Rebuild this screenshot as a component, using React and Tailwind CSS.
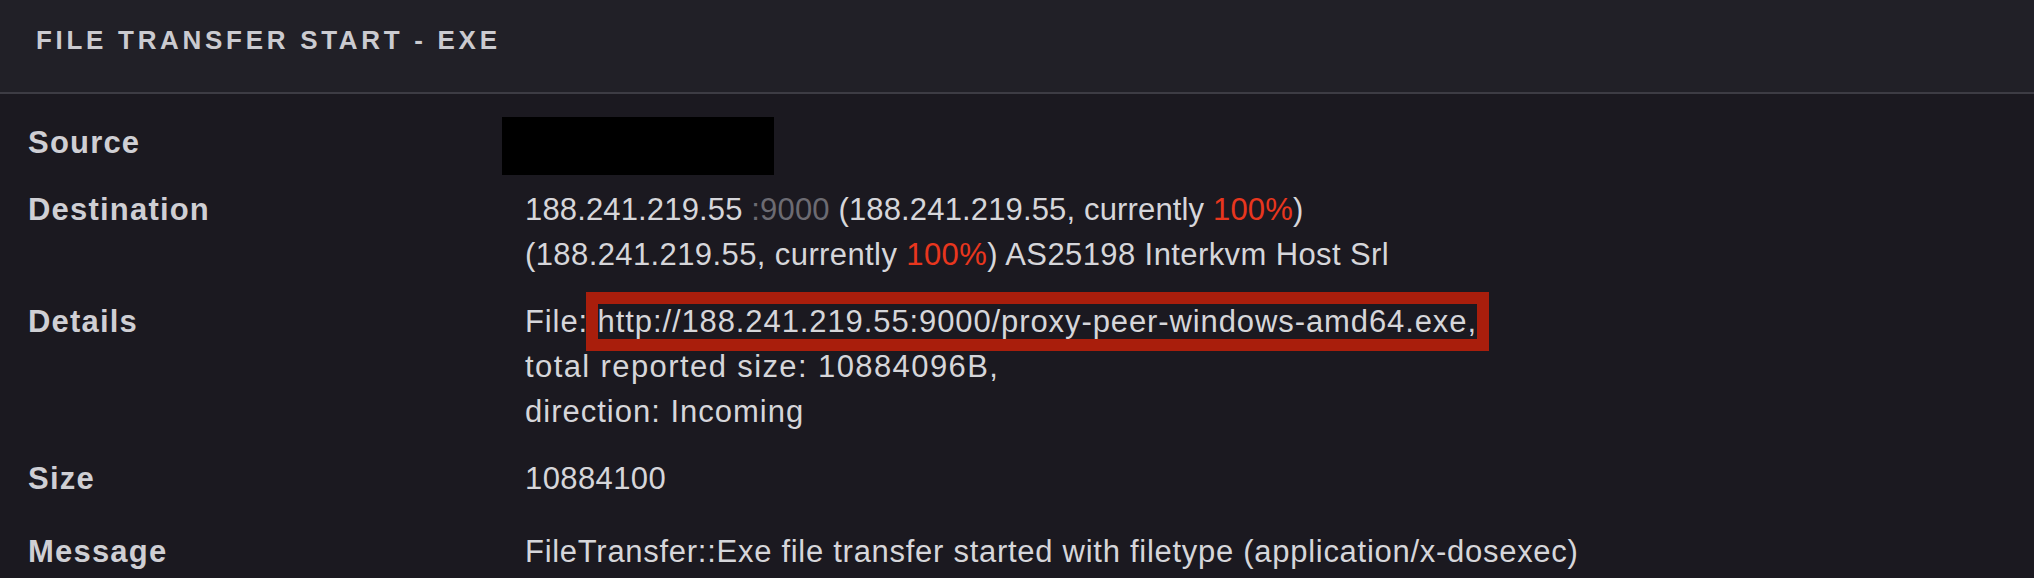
import React from "react";

const rows = [
  { label: "Source", redacted: true },
  {
    label: "Destination",
    lines: [
      {
        cls: "tracking-[0.15px]",
        text: (
          <>
            188.241.219.55 <span className="text-[#6c6b72]">:9000</span> (188.241.219.55, currently{" "}
            <span className="text-[#e8361e]">100%</span>)
          </>
        ),
      },
      {
        cls: "tracking-[0.4px]",
        text: (
          <>
            (188.241.219.55, currently <span className="text-[#e8361e]">100%</span>) AS25198 Interkvm Host Srl
          </>
        ),
      },
    ],
  },
  {
    label: "Details",
    lines: [
      {
        cls: "tracking-[0.9px]",
        text: (
          <>
            File:{" "}
            <span className="outline-[12px] outline-solid outline-[#a91e0c]">
              http://188.241.219.55:9000/proxy-peer-windows-amd64.exe,
            </span>
          </>
        ),
      },
      { cls: "tracking-[1.4px]", text: <>total reported size: 10884096B,</> },
      { cls: "tracking-[1px]", text: <>direction: Incoming</> },
    ],
  },
  { label: "Size", lines: [{ cls: "tracking-[0.4px]", text: <>10884100</> }] },
  {
    label: "Message",
    extra: true,
    lines: [
      {
        cls: "tracking-[0.72px]",
        text: <>FileTransfer::Exe file transfer started with filetype (application/x-dosexec)</>,
      },
    ],
  },
];

const App = () => {
  return (
    <div className="w-[2034px] h-[578px] overflow-hidden bg-[#1b1920] font-['Liberation_Sans',Arial,sans-serif]">
      {/* header */}
      <div className="h-[94px] bg-[#212027] flex items-center pb-[12px] pl-[36px] border-b-2 border-[#3d3c44]">
        <h1 className="text-[26px] font-bold tracking-[3.7px] uppercase text-[#cbcbd0]">
          File Transfer Start - Exe
        </h1>
      </div>

      {/* rows */}
      <div className="pt-[15px]">
        {rows.map((row) => (
          <div
            key={row.label}
            className={`flex py-[11px] pl-[28px] leading-[45px] text-[31px] ${row.extra ? "mt-[6px]" : ""}`}
          >
            <div className="w-[497px] shrink-0 font-bold tracking-[1.2px] text-[#cfcfd4]">{row.label}</div>
            <div className="text-[#d6d6da]">
              {row.redacted ? (
                <div className="w-[272px] h-[58px] bg-black -ml-[23px] -mt-[3px] -mb-[10px]" />
              ) : (
                row.lines.map((line, i) => (
                  <div key={i} className={line.cls}>
                    {line.text}
                  </div>
                ))
              )}
            </div>
          </div>
        ))}
      </div>
    </div>
  );
};

export default App;
